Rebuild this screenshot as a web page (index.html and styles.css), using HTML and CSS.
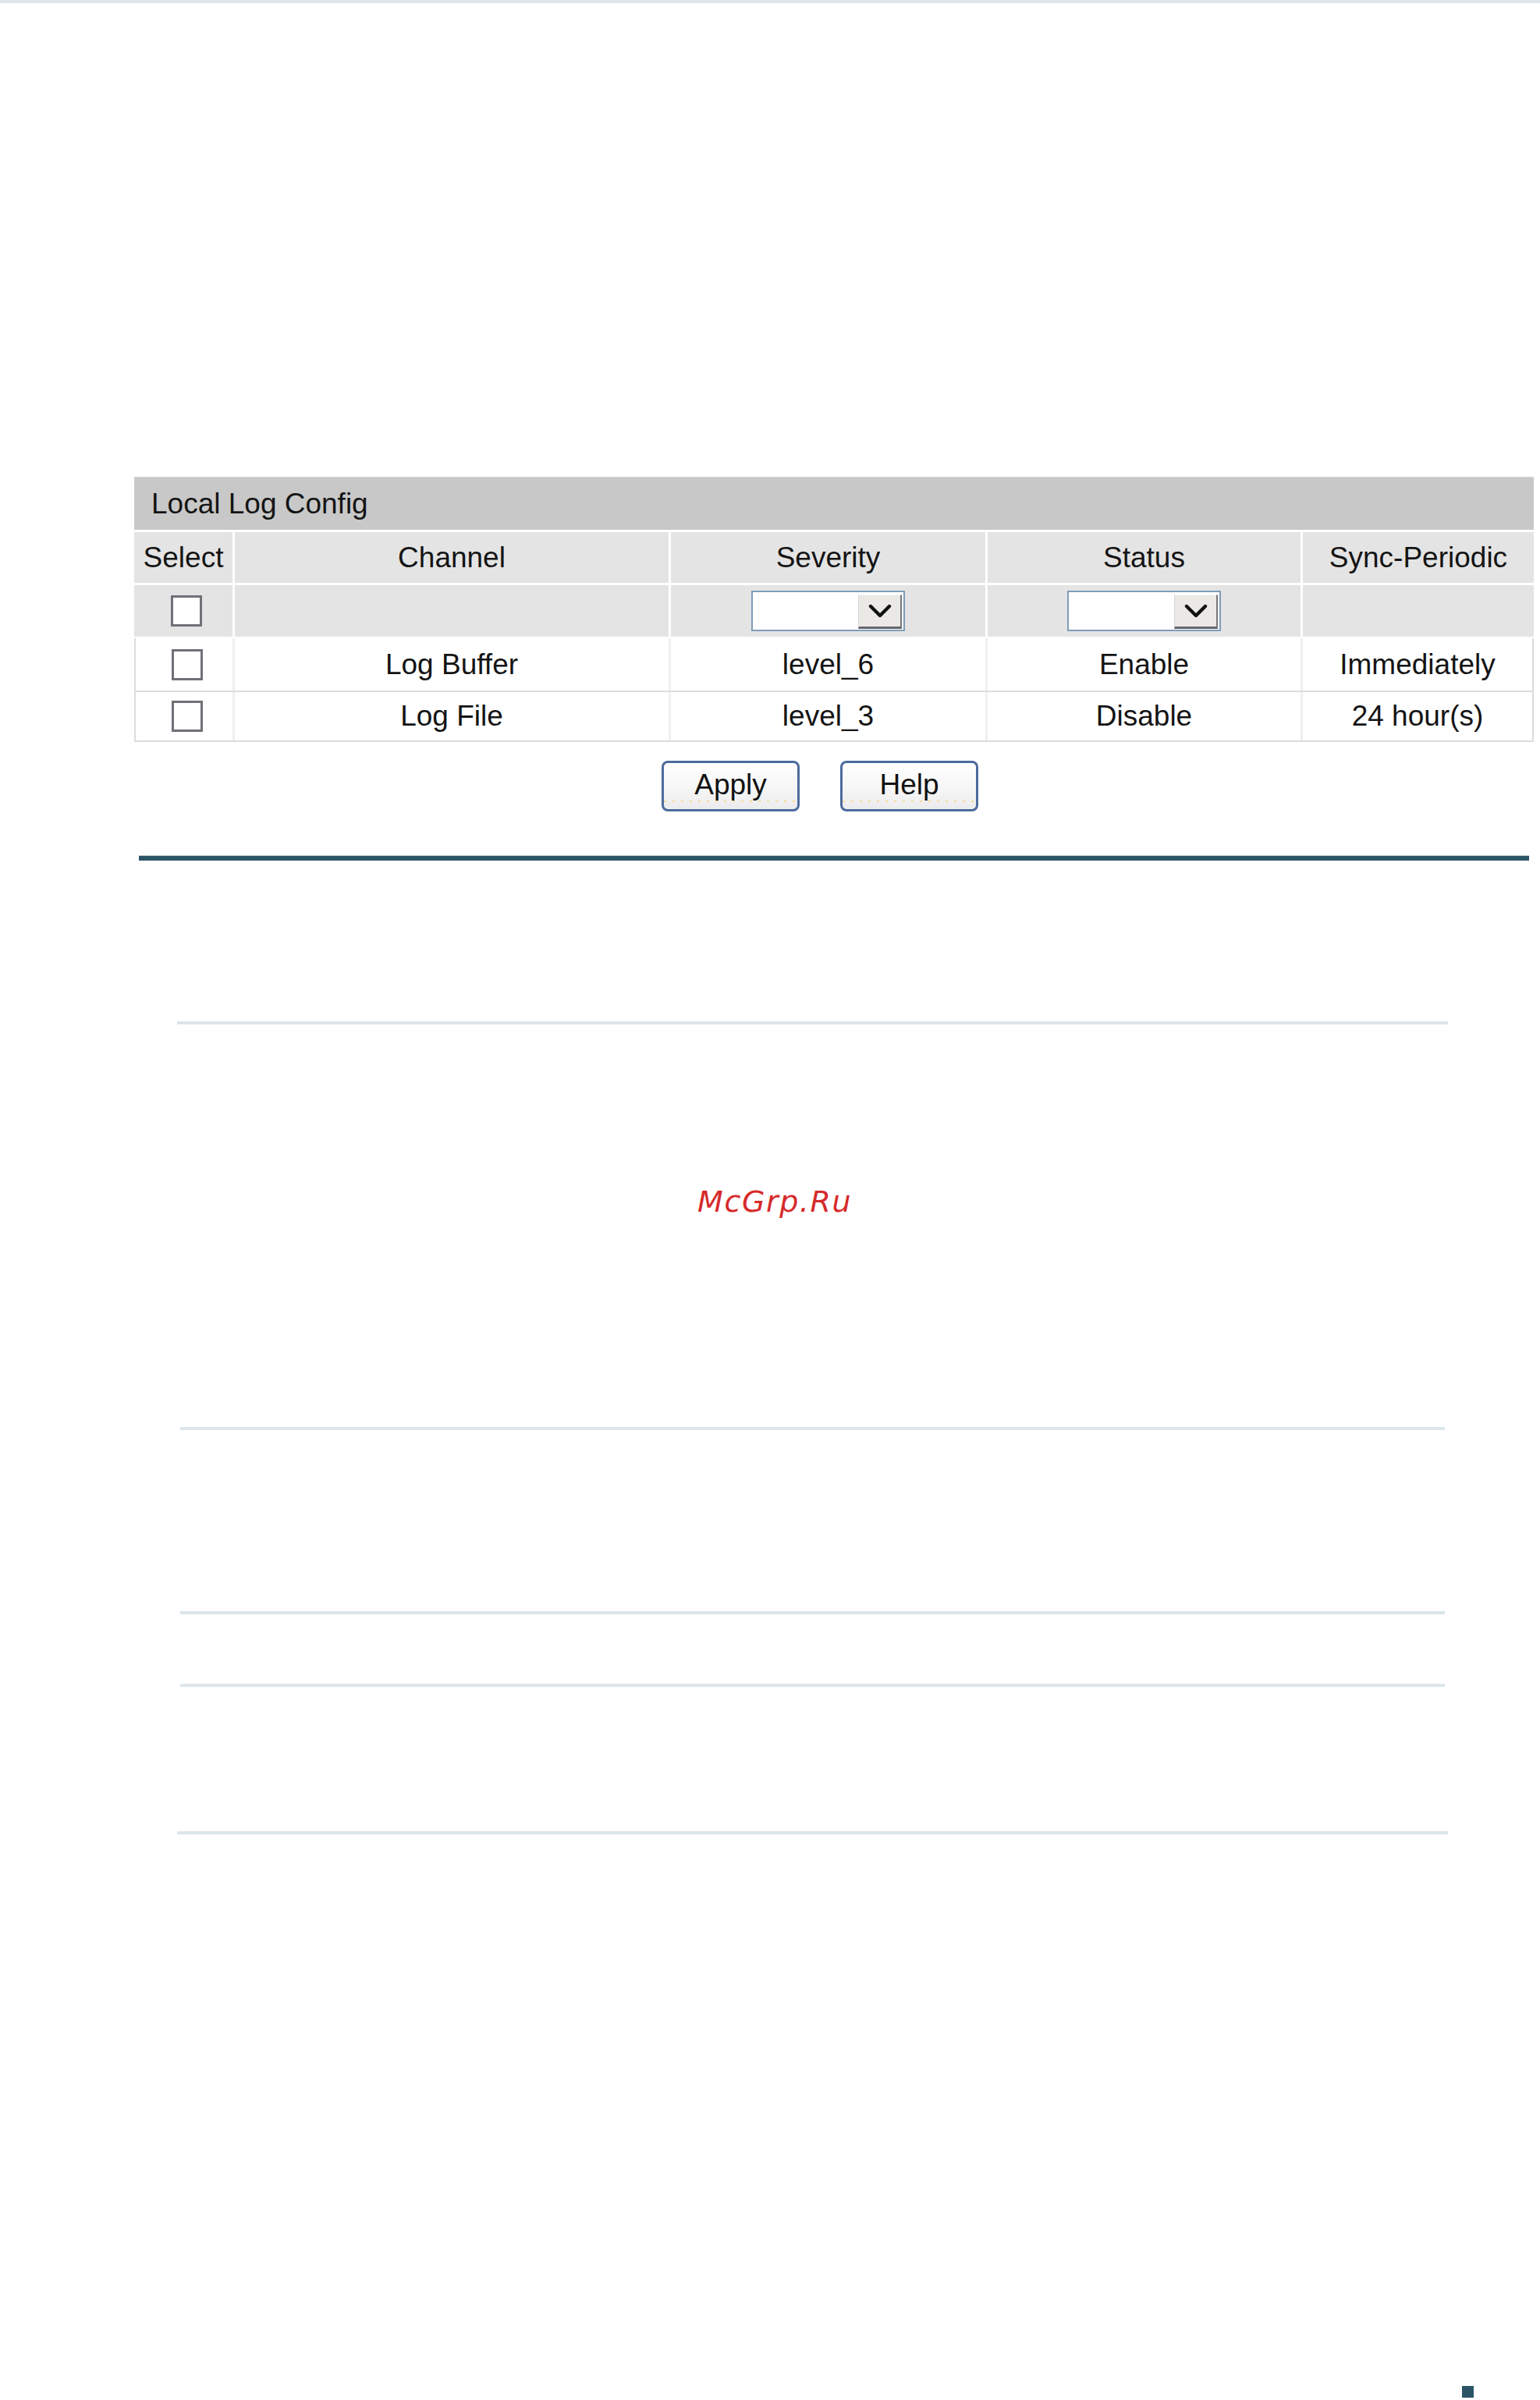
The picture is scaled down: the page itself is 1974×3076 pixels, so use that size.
FILE: index.html
```html
<!DOCTYPE html>
<html lang="en">
<head>
<meta charset="utf-8">
<title>Local Log Config</title>
<link rel="stylesheet" href="styles.css">
</head>
<body>
<div class="top-band"></div>

<section class="panel">
  <div class="grid head">
    <div class="title">Local Log Config</div>
    <div class="th">Select</div>
    <div class="th">Channel</div>
    <div class="th">Severity</div>
    <div class="th">Status</div>
    <div class="th">Sync-Periodic</div>

    <div class="tf"><span class="cb"></span></div>
    <div class="tf"></div>
    <div class="tf"><span class="sel"><span class="sel-field"></span><span class="sel-btn"><svg viewBox="0 0 30 18" width="30" height="18"><path d="M3 3 L15 15 L27 3" fill="none" stroke="#111" stroke-width="4.4" stroke-linecap="round" stroke-linejoin="round"/></svg></span></span></div>
    <div class="tf"><span class="sel"><span class="sel-field"></span><span class="sel-btn"><svg viewBox="0 0 30 18" width="30" height="18"><path d="M3 3 L15 15 L27 3" fill="none" stroke="#111" stroke-width="4.4" stroke-linecap="round" stroke-linejoin="round"/></svg></span></span></div>
    <div class="tf"></div>
  </div>

  <div class="data">
    <div class="grid row">
      <div class="td"><span class="cb"></span></div>
      <div class="td">Log Buffer</div>
      <div class="td">level_6</div>
      <div class="td">Enable</div>
      <div class="td">Immediately</div>
    </div>
    <div class="grid row second">
      <div class="td"><span class="cb"></span></div>
      <div class="td">Log File</div>
      <div class="td">level_3</div>
      <div class="td">Disable</div>
      <div class="td">24 hour(s)</div>
    </div>
  </div>

  <div class="actions">
    <button class="btn" type="button">Apply</button>
    <button class="btn" type="button">Help</button>
  </div>
</section>

<div class="rule-dark"></div>

<div class="rule rule-wide r1"></div>
<div class="watermark">McGrp.Ru</div>
<div class="rule r2"></div>
<div class="rule r3"></div>
<div class="rule r4"></div>
<div class="rule rule-wide r5"></div>

<div class="page-mark"></div>
</body>
</html>
```

FILE: styles.css
```css
html, body {
  margin: 0;
  padding: 0;
  background: #ffffff;
}

body {
  font-family: "Liberation Sans", Arial, sans-serif;
  color: #141414;
  font-size: 37px;
  width: 1974px;
}

.top-band {
  height: 4px;
  background: #dce6eb;
}

.panel {
  margin: 607px 0 0 172px;
  width: 1794px;
}

.grid {
  display: grid;
  grid-template-columns: 126px 556px 403px 401px 1fr;
  column-gap: 3px;
}

.head {
  row-gap: 3px;
  background: #ffffff;
}

.title {
  grid-column: 1 / -1;
  height: 68px;
  background: #c8c8c8;
  display: flex;
  align-items: center;
  padding-left: 22px;
  border-top: 1px solid #d6d6d6;
  box-sizing: border-box;
}

.th {
  height: 65px;
  background: #e4e4e4;
  display: flex;
  align-items: center;
  justify-content: center;
  white-space: nowrap;
}

.tf {
  height: 66px;
  background: #e4e4e4;
  display: flex;
  align-items: center;
  justify-content: center;
}

.cb {
  display: block;
  width: 40px;
  height: 40px;
  box-sizing: border-box;
  border: 3px solid #707078;
  background: #ffffff;
  margin-left: 8px;
}

.sel {
  display: flex;
  width: 197px;
  height: 52px;
  box-sizing: border-box;
  border: 2px solid #7f9db9;
  background: #ffffff;
  padding: 3px 2px 1px 0;
}

.sel-field {
  flex: 1;
}

.sel-btn {
  width: 56px;
  box-sizing: border-box;
  background: #ebe9e6;
  border-top: 1px solid #f6f6f6;
  border-left: 1px solid #d8d8d8;
  border-right: 2px solid #77787c;
  border-bottom: 3px solid #66676b;
  display: flex;
  align-items: center;
  justify-content: center;
}

.data {
  margin-top: 2px;
  border-left: 2px solid #dcdcdc;
  border-right: 2px solid #dcdcdc;
  border-bottom: 2px solid #dcdcdc;
}

.data .grid {
  grid-template-columns: 124px 556px 403px 401px 1fr;
  background: #f0f0f0;
  column-gap: 3px;
}

.row {
  height: 67px;
}

.row.second {
  height: 62px;
  border-top: 2px solid #dcdcdc;
}

.td {
  background: #ffffff;
  display: flex;
  align-items: center;
  justify-content: center;
  white-space: nowrap;
}

.actions {
  display: flex;
  justify-content: center;
  gap: 52px;
  margin-top: 24px;
  padding-right: 36px;
}

.btn {
  width: 177px;
  height: 65px;
  box-sizing: border-box;
  border: 3px solid #4c6b9d;
  border-radius: 8px;
  font-family: "Liberation Sans", Arial, sans-serif;
  font-size: 37px;
  color: #111111;
  padding: 0 0 4px 0;
  background:
    repeating-linear-gradient(90deg, #f1dc9a 0 3px, transparent 3px 11px) 0 calc(100% - 9px) / 100% 2px no-repeat,
    linear-gradient(#ffffff 0%, #f6f6f6 55%, #ececec 100%);
}

.rule-dark {
  margin: 56px 0 0 178px;
  width: 1782px;
  height: 7px;
  background: #2c5567;
  border-top: 1px solid #c8d2d6;
  box-sizing: border-box;
}

.rule {
  height: 4px;
  background: #dce6eb;
  width: 1621px;
  margin-left: 231px;
}

.rule-wide {
  width: 1629px;
  margin-left: 227px;
}

.r1 { margin-top: 206px; }

.watermark {
  margin: 205px 0 0 894px;
  font-family: "DejaVu Sans", sans-serif;
  font-style: italic;
  font-size: 38px;
  line-height: 44px;
  letter-spacing: 1.6px;
  color: #d62a2a;
  height: 44px;
}

.r2 { margin-top: 267px; }
.r3 { margin-top: 232px; }
.r4 { margin-top: 89px; }
.r5 { margin-top: 185px; }

.page-mark {
  margin: 707px 0 0 1874px;
  width: 15px;
  height: 15px;
  background: #2b5567;
}
```
